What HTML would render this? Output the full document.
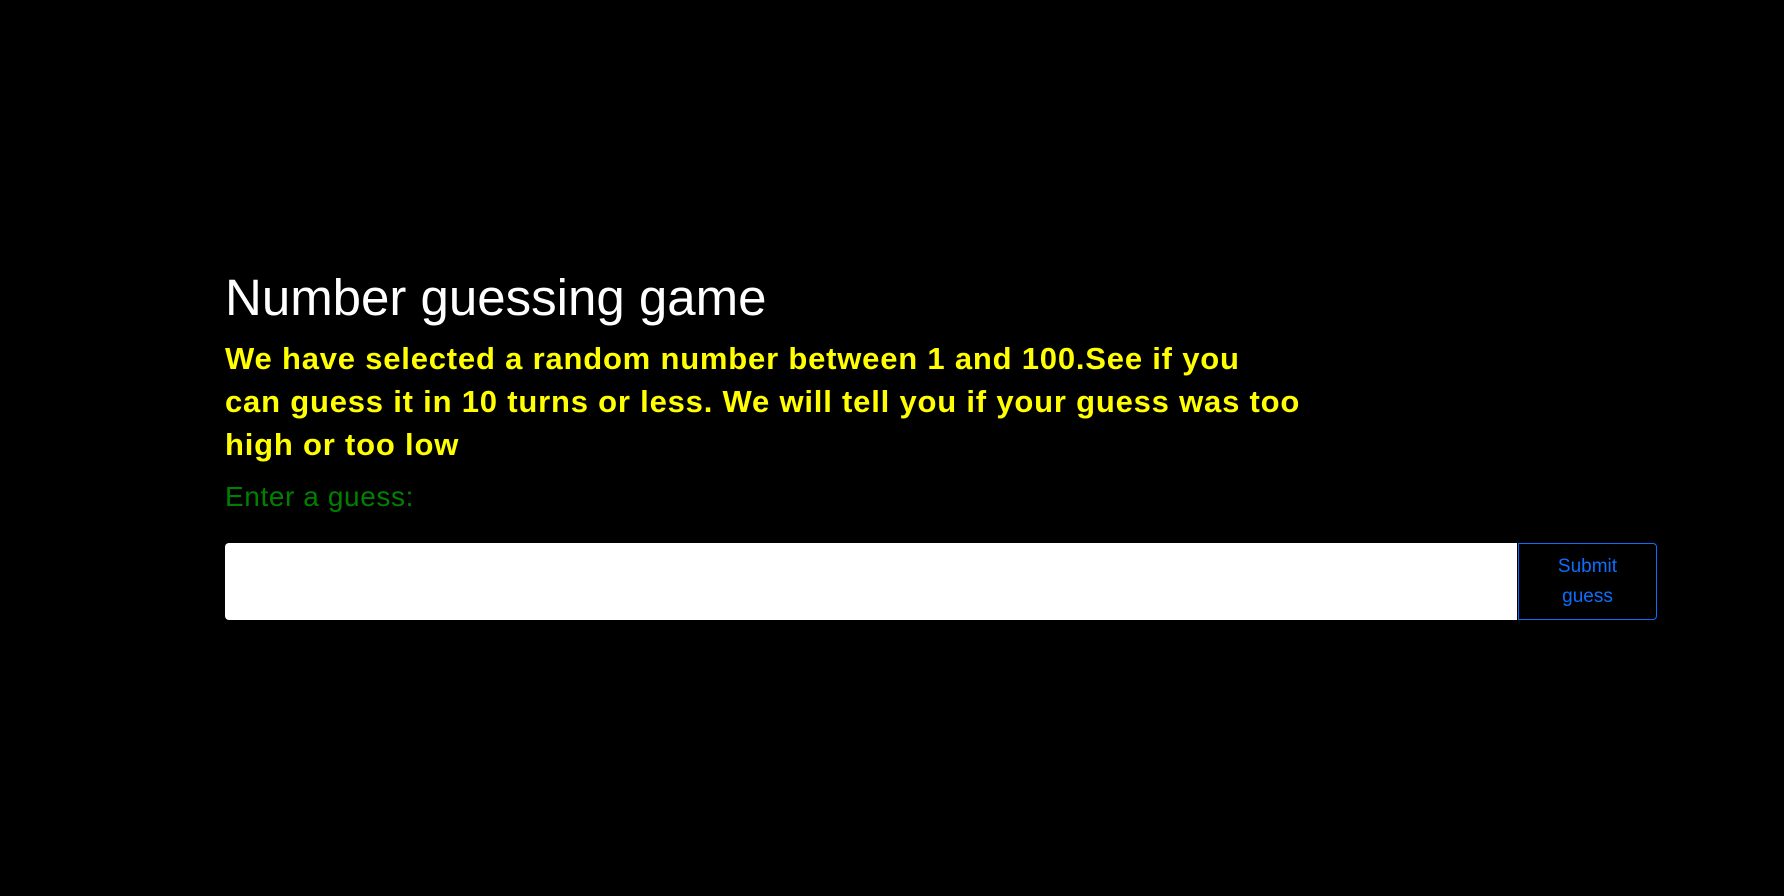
<!DOCTYPE html>
<html><head><style>
html,body{margin:0;background:#000;width:1784px;height:896px;overflow:hidden;font-family:"Liberation Sans",sans-serif}
.t{position:absolute;left:225px;top:268px;color:#fff;font-size:51px;line-height:60px;white-space:nowrap}
.p{position:absolute;left:225px;top:337px;color:#ff0;font-weight:bold;font-size:31px;letter-spacing:0.8px;line-height:43px;white-space:nowrap}
.l{position:absolute;left:225px;top:481px;color:#008000;font-size:28px;letter-spacing:0.6px;line-height:32px}
.i{position:absolute;left:225px;top:543px;width:1292px;height:77px;background:#fff;border-radius:4px 0 0 4px}
.b{position:absolute;left:1518px;top:543px;width:137px;height:75px;border:1px solid #0d6efd;border-radius:0 4px 4px 0;color:#0d6efd;font-size:19px;line-height:30px;text-align:center;display:flex;align-items:center;justify-content:center}
</style></head><body>
<div class="t">Number guessing game</div>
<div class="p">We have selected a random number between 1 and 100.See if you<br>can guess it in 10 turns or less. We will tell you if your guess was too<br>high or too low</div>
<div class="l">Enter a guess:</div>
<div class="i"></div>
<div class="b"><span>Submit<br>guess</span></div>
</body></html>
